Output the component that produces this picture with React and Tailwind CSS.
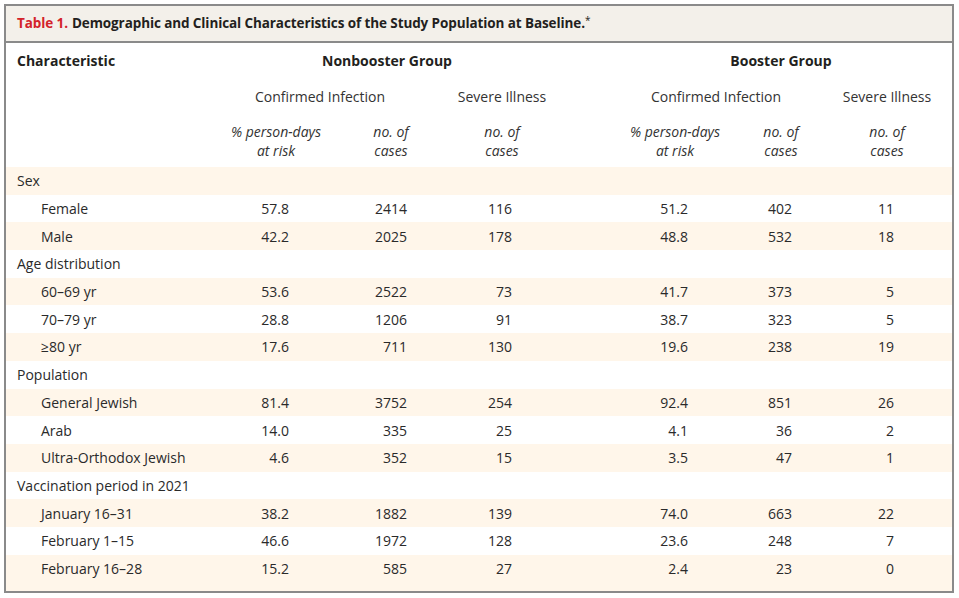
import React from 'react';

const cols = "grid grid-cols-[210px_120px_110px_112px_52px_130px_82px_130px]";

const sections = [
    {
        title: "Sex",
        rows: [
            ["Female", "57.8", "2414", "116", "51.2", "402", "11"],
            ["Male", "42.2", "2025", "178", "48.8", "532", "18"],
        ],
    },
    {
        title: "Age distribution",
        rows: [
            ["60–69 yr", "53.6", "2522", "73", "41.7", "373", "5"],
            ["70–79 yr", "28.8", "1206", "91", "38.7", "323", "5"],
            ["≥80 yr", "17.6", "711", "130", "19.6", "238", "19"],
        ],
    },
    {
        title: "Population",
        rows: [
            ["General Jewish", "81.4", "3752", "254", "92.4", "851", "26"],
            ["Arab", "14.0", "335", "25", "4.1", "36", "2"],
            ["Ultra-Orthodox Jewish", "4.6", "352", "15", "3.5", "47", "1"],
        ],
    },
    {
        title: "Vaccination period in 2021",
        rows: [
            ["January 16–31", "38.2", "1882", "139", "74.0", "663", "22"],
            ["February 1–15", "46.6", "1972", "128", "23.6", "248", "7"],
            ["February 16–28", "15.2", "585", "27", "2.4", "23", "0"],
        ],
    },
];

// flatten into striped rows
const bodyRows = [];
sections.forEach((s) => {
    bodyRows.push({ type: "section", label: s.title });
    s.rows.forEach((r) => bodyRows.push({ type: "item", cells: r }));
});

const SubHead = ({ children, className = "" }) => (
    <div className={`flex flex-col items-center justify-center italic leading-[19px] text-[#333] ${className}`}>
        {children}
    </div>
);

const App = () => {
    return (
        <div className="w-[959px] h-[598px] bg-white pt-[4px] pl-[4px] font-['Open_Sans',sans-serif] text-[14px] text-[#2a2a2a]">
            <div className="w-[950px] border-2 border-[#8a8a8a]">
                {/* Title */}
                <div className="h-[37px] bg-[#f3f0ea] border-b-2 border-[#8a8a8a] flex items-center pl-[11px] text-[13.5px] font-bold tracking-[-0.1px]">
                    <span className="text-[#d3232b] mr-[4px]">Table 1.</span>
                    <span className="text-[#231f20]">
                        Demographic and Clinical Characteristics of the Study Population at Baseline.
                        <span className="text-[10px] align-top font-normal">*</span>
                    </span>
                </div>

                {/* Header */}
                <div className={`${cols} h-[35px] items-center font-bold text-[#231f20]`}>
                    <div className="pl-[11px]">Characteristic</div>
                    <div className="col-start-2 col-span-3 text-center">Nonbooster Group</div>
                    <div className="col-start-6 col-span-3 text-center">Booster Group</div>
                </div>
                <div className={`${cols} h-[36px] items-center text-[#333]`}>
                    <div className="col-start-2 col-span-2 text-center pr-[22px]">Confirmed Infection</div>
                    <div className="col-start-4 text-center">Severe Illness</div>
                    <div className="col-start-6 col-span-2 text-center">Confirmed Infection</div>
                    <div className="col-start-8 text-center">Severe Illness</div>
                </div>
                <div className={`${cols} h-[53px]`}>
                    <SubHead className="col-start-2"><span>% person-days</span><span>at risk</span></SubHead>
                    <SubHead className="col-start-3"><span>no. of</span><span>cases</span></SubHead>
                    <SubHead className="col-start-4"><span>no. of</span><span>cases</span></SubHead>
                    <SubHead className="col-start-6"><span>% person-days</span><span>at risk</span></SubHead>
                    <SubHead className="col-start-7"><span>no. of</span><span>cases</span></SubHead>
                    <SubHead className="col-start-8"><span>no. of</span><span>cases</span></SubHead>
                </div>

                {/* Body */}
                <div>
                    {bodyRows.map((row, i) => {
                        const striped = i % 2 === 0 ? "bg-[#fff6ea]" : "bg-white";
                        const last = i === bodyRows.length - 1;
                        if (row.type === "section") {
                            return (
                                <div key={i} className={`${striped} h-[27.7px] flex items-center pl-[11px] text-[#2a2a2a]`}>
                                    {row.label}
                                </div>
                            );
                        }
                        const [label, a, b, c, d, e, f] = row.cells;
                        return (
                            <div key={i} className={`${striped} ${cols} ${last ? "h-[36px] pb-[8px]" : "h-[27.7px]"} items-center text-[#2a2a2a]`}>
                                <div className="pl-[35px]">{label}</div>
                                <div className="text-right pr-[47px]">{a}</div>
                                <div className="text-right pr-[39px]">{b}</div>
                                <div className="text-right pr-[46px]">{c}</div>
                                <div />
                                <div className="text-right pr-[52px]">{d}</div>
                                <div className="text-right pr-[30px]">{e}</div>
                                <div className="text-right pr-[58px]">{f}</div>
                            </div>
                        );
                    })}
                </div>
            </div>
        </div>
    );
};

export default App;
